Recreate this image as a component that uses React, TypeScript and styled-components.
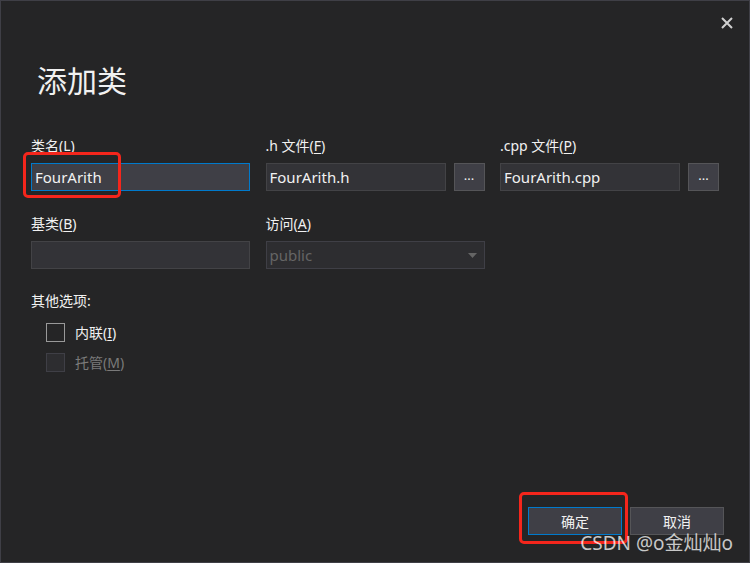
import React from 'react'
import styled, { createGlobalStyle } from 'styled-components'

const GlobalStyle = createGlobalStyle`
  html, body {
    margin: 0;
    padding: 0;
    background: #252526;
  }
  * {
    box-sizing: border-box;
  }
`

const FONT = `"Noto Sans", "Noto Sans CJK SC", sans-serif`

const Window = styled.div`
  position: relative;
  width: 750px;
  height: 563px;
  background: #252526;
  border: 1px solid #3f3f46;
  color: #f1f1f1;
  font-family: ${FONT};
  display: flex;
  flex-direction: column;
  overflow: hidden;
`

const TitleBar = styled.div`
  display: flex;
  justify-content: flex-end;
  height: 44px;
  padding: 10px 10px 0 0;
`

const CloseButton = styled.button`
  width: 24px;
  height: 24px;
  border: none;
  background: transparent;
  padding: 0;
  display: flex;
  align-items: center;
  justify-content: center;
  cursor: pointer;
`

const Heading = styled.h1`
  margin: 16px 0 0 36px;
  font-size: 30px;
  font-weight: 400;
  line-height: 40px;
  color: #f1f1f1;
`

const FieldGrid = styled.div`
  display: grid;
  grid-template-columns: 219px 219px 219px;
  column-gap: 15.5px;
  row-gap: 23px;
  margin: 35px 0 0 30px;
`

const Field = styled.div`
  position: relative;
  display: flex;
  flex-direction: column;
`

const Label = styled.label<{ $disabled?: boolean }>`
  font-size: 14px;
  line-height: 20px;
  height: 20px;
  margin-bottom: 7px;
  color: ${({ $disabled }) => ($disabled ? '#8a8a8a' : '#f1f1f1')};
  white-space: nowrap;

  u {
    text-decoration: underline;
    text-underline-offset: 2px;
  }
`

const InputRow = styled.div`
  display: flex;
  gap: 8px;
`

const TextBox = styled.div<{ $focused?: boolean; $disabled?: boolean }>`
  flex: 1;
  height: 28px;
  padding: 0 3px;
  display: flex;
  align-items: center;
  justify-content: space-between;
  font-size: 15px;
  color: ${({ $disabled }) => ($disabled ? '#656565' : '#f1f1f1')};
  background: ${({ $focused, $disabled }) => ($focused ? '#3f3f46' : $disabled ? '#2d2d30' : '#333337')};
  border: 1px solid ${({ $focused, $disabled }) => ($focused ? '#007acc' : $disabled ? '#3f3f46' : '#434346')};
`

const BrowseButton = styled.button`
  width: 31px;
  height: 28px;
  flex: none;
  background: #3f3f46;
  border: 1px solid #555558;
  color: #f1f1f1;
  font-family: ${FONT};
  font-size: 13px;
  line-height: 1;
  padding: 0 0 4px;
  cursor: pointer;
`

const Highlight = styled.div`
  position: absolute;
  border: 3px solid #f5261c;
  border-radius: 5px;
  pointer-events: none;
`

const FieldHighlight = styled(Highlight)`
  left: -8px;
  top: 16px;
  width: 98px;
  height: 46px;
`

const ButtonHighlight = styled(Highlight)`
  left: -9px;
  top: -15px;
  width: 109px;
  height: 52px;
`

const OptionsTitle = styled.div`
  margin: 22px 0 0 30px;
  font-size: 14px;
  line-height: 20px;
`

const CheckList = styled.div`
  display: flex;
  flex-direction: column;
  gap: 11px;
  margin: 12px 0 0 45px;
`

const CheckRow = styled.div<{ $disabled?: boolean }>`
  display: flex;
  align-items: center;
  gap: 10px;
  font-size: 14px;
  line-height: 19px;
  color: ${({ $disabled }) => ($disabled ? '#7a7a7a' : '#f1f1f1')};

  u {
    text-decoration: underline;
    text-underline-offset: 2px;
  }
`

const CheckBox = styled.span<{ $disabled?: boolean }>`
  width: 19px;
  height: 19px;
  flex: none;
  background: ${({ $disabled }) => ($disabled ? '#2d2d30' : '#252526')};
  border: 1px solid ${({ $disabled }) => ($disabled ? '#3f3f46' : '#999999')};
`

const Footer = styled.div`
  position: relative;
  margin-top: auto;
  margin-bottom: 27px;
  padding-right: 25px;
  display: flex;
  justify-content: flex-end;
  gap: 8px;
`

const ButtonWrap = styled.div`
  position: relative;
`

const DialogButton = styled.button<{ $primary?: boolean }>`
  width: 94px;
  height: 28px;
  background: #3f3f46;
  border: 1px solid ${({ $primary }) => ($primary ? '#007acc' : '#555558')};
  color: #f1f1f1;
  font-family: ${FONT};
  font-size: 14px;
  cursor: pointer;
`

const Watermark = styled.div`
  position: absolute;
  right: 16px;
  bottom: 7px;
  font-size: 19px;
  line-height: 24px;
  color: rgba(255, 255, 255, 0.75);
  font-family: ${FONT};
  pointer-events: none;
  white-space: nowrap;
`

const Caret = () => (
  <svg width="9" height="5" viewBox="0 0 9 5" style={{ marginRight: 4 }}>
    <path d="M0 0h9L4.5 5z" fill="#656565" />
  </svg>
)

export default function App() {
  return (
    <>
      <GlobalStyle />
      <Window>
        <TitleBar>
          <CloseButton aria-label="close">
            <svg width="12" height="12" viewBox="0 0 12 12">
              <path d="M1 1l10 10M11 1L1 11" stroke="#d0d0d0" strokeWidth="2" />
            </svg>
          </CloseButton>
        </TitleBar>
        <Heading>添加类</Heading>

        <FieldGrid>
          <Field>
            <Label>类名(<u>L</u>)</Label>
            <InputRow>
              <TextBox $focused>FourArith</TextBox>
            </InputRow>
            <FieldHighlight />
          </Field>
          <Field>
            <Label>.h 文件(<u>F</u>)</Label>
            <InputRow>
              <TextBox>FourArith.h</TextBox>
              <BrowseButton>...</BrowseButton>
            </InputRow>
          </Field>
          <Field>
            <Label>.cpp 文件(<u>P</u>)</Label>
            <InputRow>
              <TextBox>FourArith.cpp</TextBox>
              <BrowseButton>...</BrowseButton>
            </InputRow>
          </Field>
          <Field>
            <Label>基类(<u>B</u>)</Label>
            <InputRow>
              <TextBox />
            </InputRow>
          </Field>
          <Field>
            <Label>访问(<u>A</u>)</Label>
            <InputRow>
              <TextBox $disabled>
                public
                <Caret />
              </TextBox>
            </InputRow>
          </Field>
        </FieldGrid>

        <OptionsTitle>其他选项:</OptionsTitle>
        <CheckList>
          <CheckRow>
            <CheckBox />
            <span>内联(<u>I</u>)</span>
          </CheckRow>
          <CheckRow $disabled>
            <CheckBox $disabled />
            <span>托管(<u>M</u>)</span>
          </CheckRow>
        </CheckList>

        <Footer>
          <ButtonWrap>
            <DialogButton $primary>确定</DialogButton>
            <ButtonHighlight />
          </ButtonWrap>
          <ButtonWrap>
            <DialogButton>取消</DialogButton>
          </ButtonWrap>
        </Footer>
        <Watermark>CSDN @o金灿灿o</Watermark>
      </Window>
    </>
  )
}
